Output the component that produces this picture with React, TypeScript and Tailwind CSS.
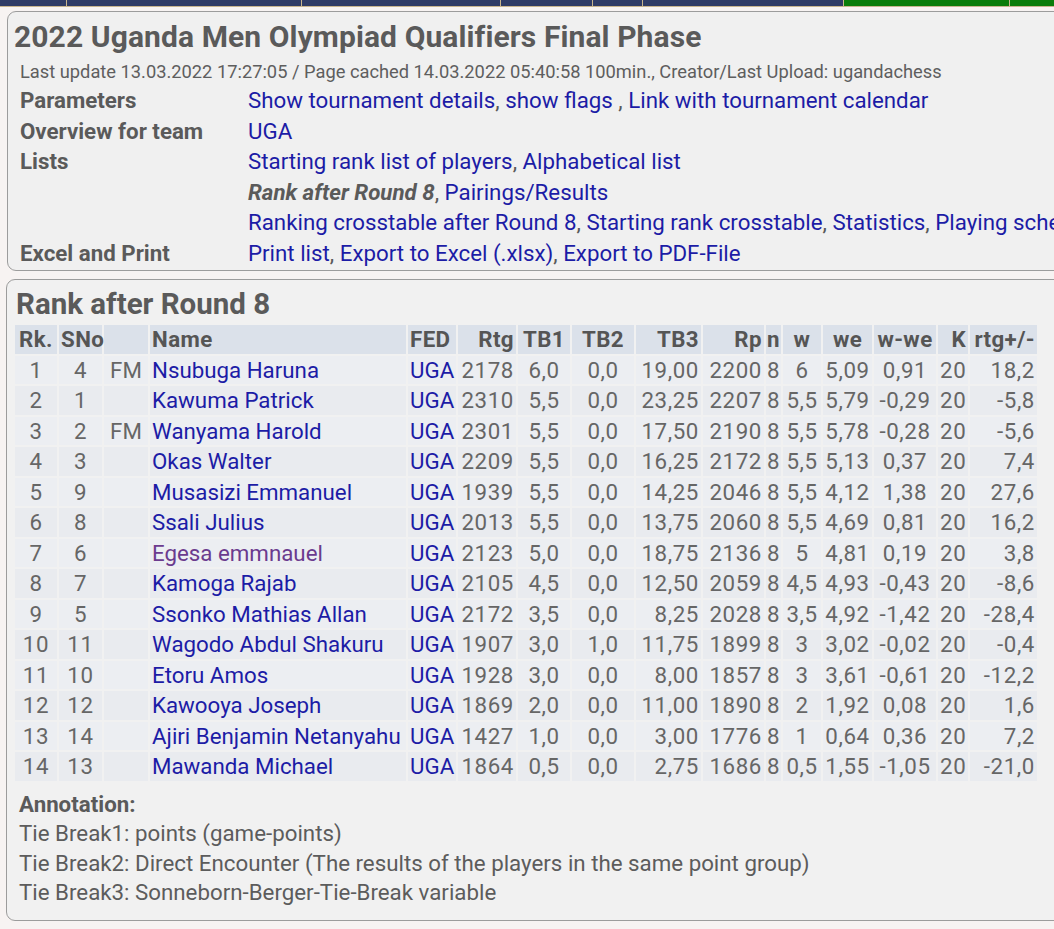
const navSegments = [
  { w: "w-[67px]", bg: "bg-[#2f3b66]" },
  { w: "w-[235px]", bg: "bg-[#2f3b66]" },
  { w: "w-[199px]", bg: "bg-[#2f3b66]" },
  { w: "w-[93px]", bg: "bg-[#2f3b66]" },
  { w: "w-[50px]", bg: "bg-[#2f3b66]" },
  { w: "w-[201px]", bg: "bg-[#2f3b66]" },
  { w: "w-[166px]", bg: "bg-[#0a7d0a]" },
  { w: "w-[120px]", bg: "bg-[#0a7d0a]" },
];

const infoRows = [
  {
    label: "Parameters",
    links: [
      ["Show tournament details", ", "],
      ["show flags", " , "],
      ["Link with tournament calendar", ""],
    ],
  },
  { label: "Overview for team", links: [["UGA", ""]] },
  {
    label: "Lists",
    links: [
      ["Starting rank list of players", ", "],
      ["Alphabetical list", ""],
    ],
  },
  {
    label: "",
    current: "Rank after Round 8",
    links: [["Pairings/Results", ""]],
  },
  {
    label: "",
    links: [
      ["Ranking crosstable after Round 8", ", "],
      ["Starting rank crosstable", ", "],
      ["Statistics", ", "],
      ["Playing schedule", ""],
    ],
  },
  {
    label: "Excel and Print",
    links: [
      ["Print list", ", "],
      ["Export to Excel (.xlsx)", ", "],
      ["Export to PDF-File", ""],
    ],
  },
];

// column definitions: header, width, alignment
const cols = [
  { h: "Rk.", w: "w-[42px]", a: "text-center px-[2px]" },
  { h: "SNo", w: "w-[43px]", a: "text-center px-[2px]" },
  { h: "", w: "w-[44px]", a: "text-center px-[2px]" },
  { h: "Name", w: "w-[256px]", a: "text-left px-[2px]" },
  { h: "FED", w: "w-[48px]", a: "text-left px-[2px]" },
  { h: "Rtg", w: "w-[58px]", a: "text-right px-[2px]" },
  { h: "TB1", w: "w-[52px]", a: "text-center px-[2px]" },
  { h: "TB2", w: "w-[62px]", a: "text-center px-[2px]" },
  { h: "TB3", w: "w-[65px]", a: "text-right px-[2px]" },
  { h: "Rp", w: "w-[61px]", a: "text-right px-[2px]" },
  { h: "n", w: "w-[15px]", a: "text-center px-0" },
  { h: "w", w: "w-[38px]", a: "text-center px-[2px]" },
  { h: "we", w: "w-[49px]", a: "text-center px-[2px]" },
  { h: "w-we", w: "w-[62px]", a: "text-center px-[2px]" },
  { h: "K", w: "w-[30px]", a: "text-right px-[2px]" },
  { h: "rtg+/-", w: "w-[67px]", a: "text-right px-[2px]" },
];

const players = [
  ["1", "4", "FM", "Nsubuga Haruna", "UGA", "2178", "6,0", "0,0", "19,00", "2200", "8", "6", "5,09", "0,91", "20", "18,2"],
  ["2", "1", "", "Kawuma Patrick", "UGA", "2310", "5,5", "0,0", "23,25", "2207", "8", "5,5", "5,79", "-0,29", "20", "-5,8"],
  ["3", "2", "FM", "Wanyama Harold", "UGA", "2301", "5,5", "0,0", "17,50", "2190", "8", "5,5", "5,78", "-0,28", "20", "-5,6"],
  ["4", "3", "", "Okas Walter", "UGA", "2209", "5,5", "0,0", "16,25", "2172", "8", "5,5", "5,13", "0,37", "20", "7,4"],
  ["5", "9", "", "Musasizi Emmanuel", "UGA", "1939", "5,5", "0,0", "14,25", "2046", "8", "5,5", "4,12", "1,38", "20", "27,6"],
  ["6", "8", "", "Ssali Julius", "UGA", "2013", "5,5", "0,0", "13,75", "2060", "8", "5,5", "4,69", "0,81", "20", "16,2"],
  ["7", "6", "", "Egesa emmnauel", "UGA", "2123", "5,0", "0,0", "18,75", "2136", "8", "5", "4,81", "0,19", "20", "3,8"],
  ["8", "7", "", "Kamoga Rajab", "UGA", "2105", "4,5", "0,0", "12,50", "2059", "8", "4,5", "4,93", "-0,43", "20", "-8,6"],
  ["9", "5", "", "Ssonko Mathias Allan", "UGA", "2172", "3,5", "0,0", "8,25", "2028", "8", "3,5", "4,92", "-1,42", "20", "-28,4"],
  ["10", "11", "", "Wagodo Abdul Shakuru", "UGA", "1907", "3,0", "1,0", "11,75", "1899", "8", "3", "3,02", "-0,02", "20", "-0,4"],
  ["11", "10", "", "Etoru Amos", "UGA", "1928", "3,0", "0,0", "8,00", "1857", "8", "3", "3,61", "-0,61", "20", "-12,2"],
  ["12", "12", "", "Kawooya Joseph", "UGA", "1869", "2,0", "0,0", "11,00", "1890", "8", "2", "1,92", "0,08", "20", "1,6"],
  ["13", "14", "", "Ajiri Benjamin Netanyahu", "UGA", "1427", "1,0", "0,0", "3,00", "1776", "8", "1", "0,64", "0,36", "20", "7,2"],
  ["14", "13", "", "Mawanda Michael", "UGA", "1864", "0,5", "0,0", "2,75", "1686", "8", "0,5", "1,55", "-1,05", "20", "-21,0"],
];

export default function App() {
  return (
    <div
      className="min-h-[929px] w-full overflow-hidden bg-[#f7f3f2] text-[#5c5c5c]"
      style={{ fontFamily: "Roboto, 'Liberation Sans', sans-serif" }}
    >
      <div className="w-[1130px]">
        {/* Top nav strip */}
        <div className="flex h-[7px] border-b border-[#c8b48e]">
          {navSegments.map((s, i) => (
            <div key={i} className={`${s.w} ${s.bg} h-full border-r border-[#c8b48e]`} />
          ))}
        </div>

        {/* Header panel */}
        <div className="ml-[7px] mt-[4px] rounded-[9px] border border-[#9c9c9c] bg-[#f0f0f0] px-[12px] pb-[2px] pt-[8px]">
          <h1 className="-ml-[6px] text-[30px] font-bold leading-[34px] tracking-[0.1px] text-[#5a5a5a] whitespace-nowrap">
            2022 Uganda Men Olympiad Qualifiers Final Phase
          </h1>
          <p className="mt-[5px] whitespace-nowrap text-[18.3px] leading-[26px] text-[#5e5e5e]">
            Last update 13.03.2022 17:27:05 / Page cached 14.03.2022 05:40:58 100min., Creator/Last Upload: ugandachess
          </p>
          <div className="grid grid-cols-[228px_1fr]">
            {infoRows.map((row, i) => (
              <div key={i} className="contents">
                <div className="h-[30.5px] whitespace-nowrap text-[22.3px] font-bold leading-[30.5px] text-[#5a5a5a]">
                  {row.label}
                </div>
                <div className="h-[30.5px] whitespace-nowrap text-[22.3px] leading-[30.5px] text-[#1c1ca6]">
                  {row.current && (
                    <>
                      <span className="font-bold italic text-[#5a5a5a]">{row.current}</span>
                      <span className="text-[#5a5a5a]">, </span>
                    </>
                  )}
                  {row.links.map(([t, sep], j) => (
                    <span key={j}>
                      <a className="text-[#1c1ca6]">{t}</a>
                      <span className="text-[#5a5a5a]">{sep}</span>
                    </span>
                  ))}
                </div>
              </div>
            ))}
          </div>
        </div>

        {/* Rank panel */}
        <div className="ml-[6px] mt-[8px] rounded-[9px] border border-[#9c9c9c] bg-[#f1f1f1] px-[6px] pb-[12px] pt-[8px]">
          <h2 className="ml-[3px] text-[29.5px] font-bold leading-[32px] text-[#5a5a5a]">Rank after Round 8</h2>
          <table className="mt-[3px] w-[1026px] table-fixed border-separate border-spacing-[2px] text-[22.3px]">
            <thead>
              <tr>
                {cols.map((c, i) => (
                  <th
                    key={i}
                    className={`${c.w} ${c.a} h-[28.5px] overflow-visible bg-[#dbe1ea] font-bold leading-[28px] tracking-[0.4px] text-[#555] whitespace-nowrap`}
                  >
                    {c.h}
                  </th>
                ))}
              </tr>
            </thead>
            <tbody>
              {players.map((p, r) => (
                <tr key={r} className={r % 2 === 0 ? "bg-[#eceef2]" : "bg-[#e9ebef]"}>
                  {p.map((v, i) => {
                    const isName = i === 3;
                    const isFed = i === 4;
                    const visited = isName && p[3] === "Egesa emmnauel";
                    const color = visited
                      ? "text-[#6b3b8e]"
                      : isName || isFed
                        ? "text-[#1c1ca6]"
                        : "text-[#666]";
                    const track = i === 3 || i === 4 || i === 2 ? "" : "tracking-[0.6px]";
                    return (
                      <td
                        key={i}
                        className={`${cols[i].a} ${color} ${track} h-[28.5px] overflow-visible leading-[28px] whitespace-nowrap`}
                      >
                        {v}
                      </td>
                    );
                  })}
                </tr>
              ))}
            </tbody>
          </table>

          <div className="ml-[6px] mt-[7px] text-[22.3px] leading-[29.6px] text-[#5c5c5c]">
            <p className="font-bold text-[#5a5a5a]">Annotation:</p>
            <p>Tie Break1: points (game-points)</p>
            <p>Tie Break2: Direct Encounter (The results of the players in the same point group)</p>
            <p>Tie Break3: Sonneborn-Berger-Tie-Break variable</p>
          </div>
        </div>
      </div>
    </div>
  );
}
